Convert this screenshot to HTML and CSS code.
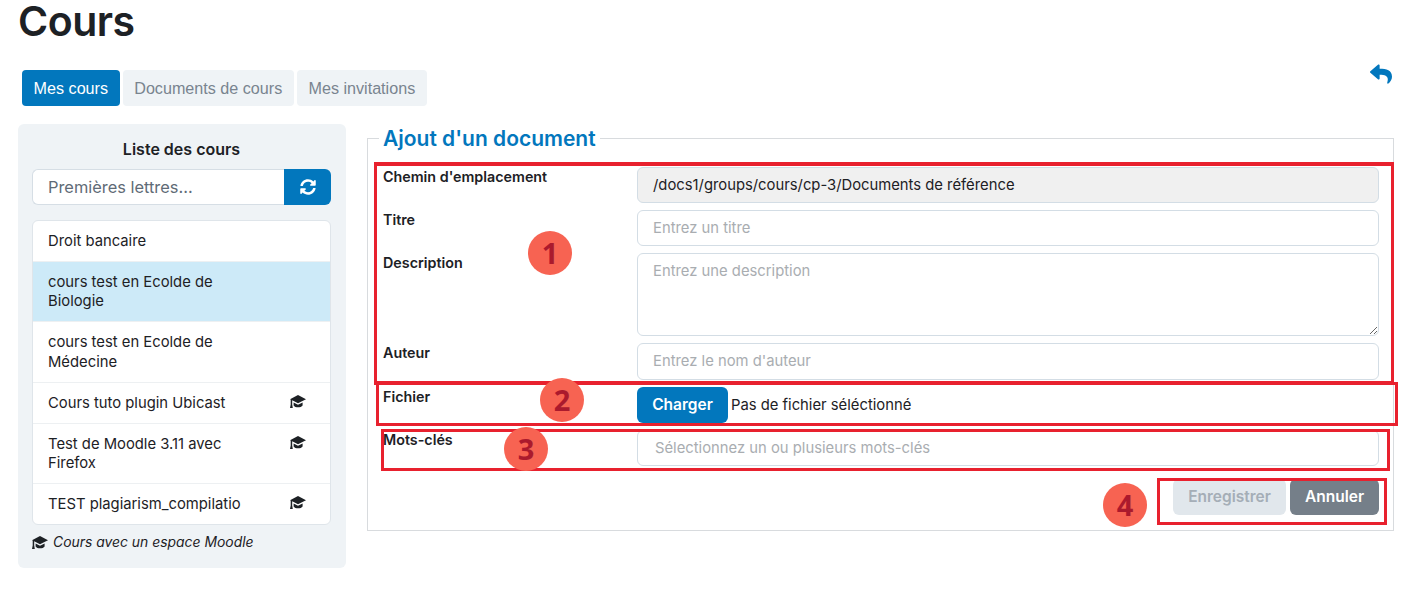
FILE: index.html
```html
<!DOCTYPE html>
<html lang="fr">
<head>
<meta charset="utf-8">
<title>Cours</title>
<link rel="stylesheet" href="styles.css">
</head>
<body>
<svg class="defs" aria-hidden="true"><symbol id="cap" viewBox="0 0 16 13"><path d="M8 0L16 4.2L8 8.3L2.2 5.3V9.6L2.8 13H0L.7 9.6V4.6L0 4.2Z"/><path d="M3.6 7.4L8 9.7L12.6 7.4V10.4C11 12.9 5 12.9 3.6 10.4Z"/></symbol></svg>
<div class="page">
  <h1 class="title">Cours</h1>
  <div class="tabbar">
    <nav class="tabs">
      <a class="tab active">Mes cours</a>
      <a class="tab">Documents de cours</a>
      <a class="tab">Mes invitations</a>
    </nav>
    <a class="back"><svg viewBox="0 0 512 512" width="22" height="22"><path d="M8.309 189.836L184.313 37.851C199.719 24.546 224 35.347 224 56.015v80.053c160.629 1.839 288 34.032 288 186.258 0 61.441-39.581 122.309-83.333 154.132-13.653 9.931-33.111-2.533-28.077-18.631 45.344-145.012-21.507-183.51-176.59-185.742V360c0 20.7-24.3 31.453-39.687 18.164l-176.004-152c-11.071-9.562-11.086-26.753 0-36.328z"/></svg></a>
  </div>
  <main class="main">
    <aside class="side">
      <h2 class="side-title">Liste des cours</h2>
      <div class="search">
        <input class="search-input" placeholder="Premières lettres...">
        <button class="search-btn"><svg viewBox="0 0 512 512" width="16" height="16"><path d="M370.72 133.28C339.458 104.008 298.888 87.962 255.848 88c-77.458.068-144.328 53.178-162.791 126.85-1.344 5.363-6.122 9.15-11.651 9.15H24.103c-7.498 0-13.194-6.807-11.807-14.176C33.933 94.924 134.813 8 256 8c66.448 0 126.791 26.136 171.315 68.685L463.03 40.97C478.149 25.851 504 36.559 504 57.941V192c0 13.255-10.745 24-24 24H345.941c-21.382 0-32.09-25.851-16.971-40.971l41.75-41.749zM32 296h134.059c21.382 0 32.09 25.851 16.971 40.971l-41.75 41.75c31.262 29.273 71.835 45.319 114.876 45.28 77.418-.07 144.315-53.144 162.787-126.849 1.344-5.363 6.122-9.15 11.651-9.15h57.304c7.498 0 13.194 6.807 11.807 14.176C478.067 417.076 377.187 504 256 504c-66.448 0-126.791-26.136-171.315-68.685L48.97 471.03C33.851 486.149 8 475.441 8 454.059V320c0-13.255 10.745-24 24-24z"/></svg></button>
      </div>
      <ul class="list">
        <li class="item"><span class="item-text">Droit bancaire</span></li>
        <li class="item selected"><span class="item-text">cours test en Ecolde de Biologie</span></li>
        <li class="item"><span class="item-text">cours test en Ecolde de Médecine</span></li>
        <li class="item"><span class="item-text">Cours tuto plugin Ubicast</span><svg class="cap"><use href="#cap"/></svg></li>
        <li class="item"><span class="item-text">Test de Moodle 3.11 avec Firefox</span><svg class="cap"><use href="#cap"/></svg></li>
        <li class="item"><span class="item-text wide">TEST plagiarism_compilatio</span><svg class="cap"><use href="#cap"/></svg></li>
      </ul>
      <p class="legend-note"><svg class="cap-note"><use href="#cap"/></svg><em>Cours avec un espace Moodle</em></p>
    </aside>
    <fieldset class="panel">
      <legend class="panel-title">Ajout d'un document</legend>
      <form class="form">
        <label class="lbl">Chemin d'emplacement</label>
        <div class="ctl disabled">/docs1/groups/cours/cp-3/Documents de référence</div>
        <label class="lbl">Titre</label>
        <input class="ctl" placeholder="Entrez un titre">
        <label class="lbl">Description</label>
        <textarea class="ctl area" placeholder="Entrez une description"></textarea>
        <label class="lbl">Auteur</label>
        <input class="ctl" placeholder="Entrez le nom d'auteur">
        <label class="lbl">Fichier</label>
        <div class="file"><button type="button" class="btn primary">Charger</button><span class="file-name">Pas de fichier séléctionné</span></div>
        <label class="lbl">Mots-clés</label>
        <input class="ctl keywords" placeholder="Sélectionnez un ou plusieurs mots-clés">
      </form>
      <div class="actions">
        <button type="button" class="btn muted">Enregistrer</button>
        <button type="button" class="btn dark">Annuler</button>
      </div>
    </fieldset>
  </main>
</div>
<div class="mark box1"></div>
<div class="mark box2"></div>
<div class="mark box3"></div>
<div class="mark box4"></div>
<div class="num n1">1</div>
<div class="num n2">2</div>
<div class="num n3">3</div>
<div class="num n4">4</div>
</body>
</html>
```
FILE: styles.css
```css
* { box-sizing: border-box; }
html, body { margin: 0; height: 589px; overflow: hidden; background: #fff; }
body { position: relative; font-family: Inter, "Noto Sans", sans-serif; font-size: 14.8px; color: #1d2125; }
.defs { position: absolute; width: 0; height: 0; }
.page { padding: 0 27px 0 18px; }
.title { margin: 0; font-size: 41px; line-height: 42px; font-weight: 600; letter-spacing: -0.5px; }
.tabbar { display: flex; justify-content: space-between; align-items: flex-start; margin-top: 28px; padding-left: 4px; }
.tabs { display: flex; gap: 3px; }
.tab { height: 36px; padding: 1px 11.6px 0; display: flex; align-items: center; background: #eff3f6; color: #79848f; border-radius: 4px; font: 16.15px "Liberation Sans", sans-serif; }
.tab.active { background: #0277bd; color: #fff; }
.back { margin: -7px 2px 0 0; fill: #0277bd; line-height: 0; }
.main { display: grid; grid-template-columns: 328px 1fr; gap: 21px; margin-top: 18px; align-items: start; }
.side { height: 444px; background: #eff3f6; border-radius: 6px; padding: 14px 15px 0 14px; }
.side-title { margin: 0 0 9px; font-size: 16px; line-height: 22px; font-weight: 600; text-align: center; }
.search { display: flex; height: 36px; }
.search-input { flex: 1; min-width: 0; border: 1px solid #d6dee5; border-right: 0; border-radius: 6px 0 0 6px; padding: 0 15px; font: inherit; font-size: 16.4px; background: #fff; }
.search-input::placeholder { color: #5f6b76; opacity: 1; }
.search-btn { width: 47px; border: 0; border-radius: 0 6px 6px 0; background: #0277bd; fill: #fff; padding: 0; display: flex; align-items: center; justify-content: center; }
.list { list-style: none; margin: 15px 0 0; padding: 0; background: #fff; border: 1px solid #dfe5ea; border-radius: 6px; overflow: hidden; }
.item { display: flex; justify-content: space-between; padding: 11px 24px 9.75px 15px; line-height: 19.25px; border-top: 1px solid #edf0f2; }
.item:first-child { border-top: 0; }
.item.selected { background: #cdeaf8; }
.item-text { width: 190px; }
.item-text.wide { width: 230px; }
.cap { width: 16px; height: 13px; margin-top: 1px; fill: #1d2125; }
.legend-note { margin: 8px 0 0; display: flex; align-items: center; gap: 5px; font-size: 13.9px; line-height: 19px; }
.cap-note { width: 16px; height: 13px; fill: #1d2125; }
.panel { margin: 0; min-width: 0; height: 407px; padding: 14px 14px 0 15px; border: 1px solid #d8dbde; }
.panel-title { margin-left: -4px; padding: 1px 4px 0; font-size: 21px; line-height: 28px; font-weight: 600; color: #0277bd; }
.form { display: grid; grid-template-columns: 254px 1fr; grid-template-rows: 36.4px 36.4px 83px 36.4px 36.4px 36.4px; gap: 7px 0; margin-top: -0.5px; }
.lbl { font-size: 14.3px; font-weight: 600; line-height: 20px; }
.ctl { display: block; width: 100%; height: 36.4px; border: 1px solid #d3dde5; border-radius: 6px; padding: 0 15px; font: inherit; color: #1d2125; background: #fff; }
.ctl::placeholder { color: #a9adb1; opacity: 1; }
.disabled { background: #f0f0f0; display: flex; align-items: center; padding-top: 1px; }
.area { height: 83px; padding-top: 8px; resize: vertical; }
.keywords { padding-left: 17px; }
.file { display: flex; align-items: center; gap: 3px; }
.btn { height: 36px; border: 0; border-radius: 6px; padding: 0 10px 1px; font: inherit; font-size: 15.5px; font-weight: 600; }
.primary { background: #0277bd; color: #fff; width: 91px; }
.muted { background: #e1e7ec; color: #a5aeb7; width: 113px; }
.dark { background: #757f89; color: #fff; width: 89px; }
.actions { display: flex; justify-content: flex-end; gap: 4px; margin-top: 13px; }
.mark { position: absolute; border: 3px solid #e8212e; }
.box1 { left: 374px; top: 162px; width: 1020px; height: 223px; border-width: 4px 3px; }
.box2 { left: 376px; top: 382px; width: 1022px; height: 44px; }
.box3 { left: 381px; top: 429px; width: 1009px; height: 42px; }
.box4 { left: 1157px; top: 478px; width: 230px; height: 47px; }
.num { position: absolute; width: 44px; height: 44px; border-radius: 50%; background: #f76352; color: #ab1a2d; font-family: "Open Sans", sans-serif; font-size: 29px; font-weight: 700; line-height: 44px; text-align: center; }
.n1 { left: 528px; top: 231px; }
.n2 { left: 540px; top: 378px; }
.n3 { left: 504px; top: 427px; }
.n4 { left: 1103px; top: 483px; }
```
